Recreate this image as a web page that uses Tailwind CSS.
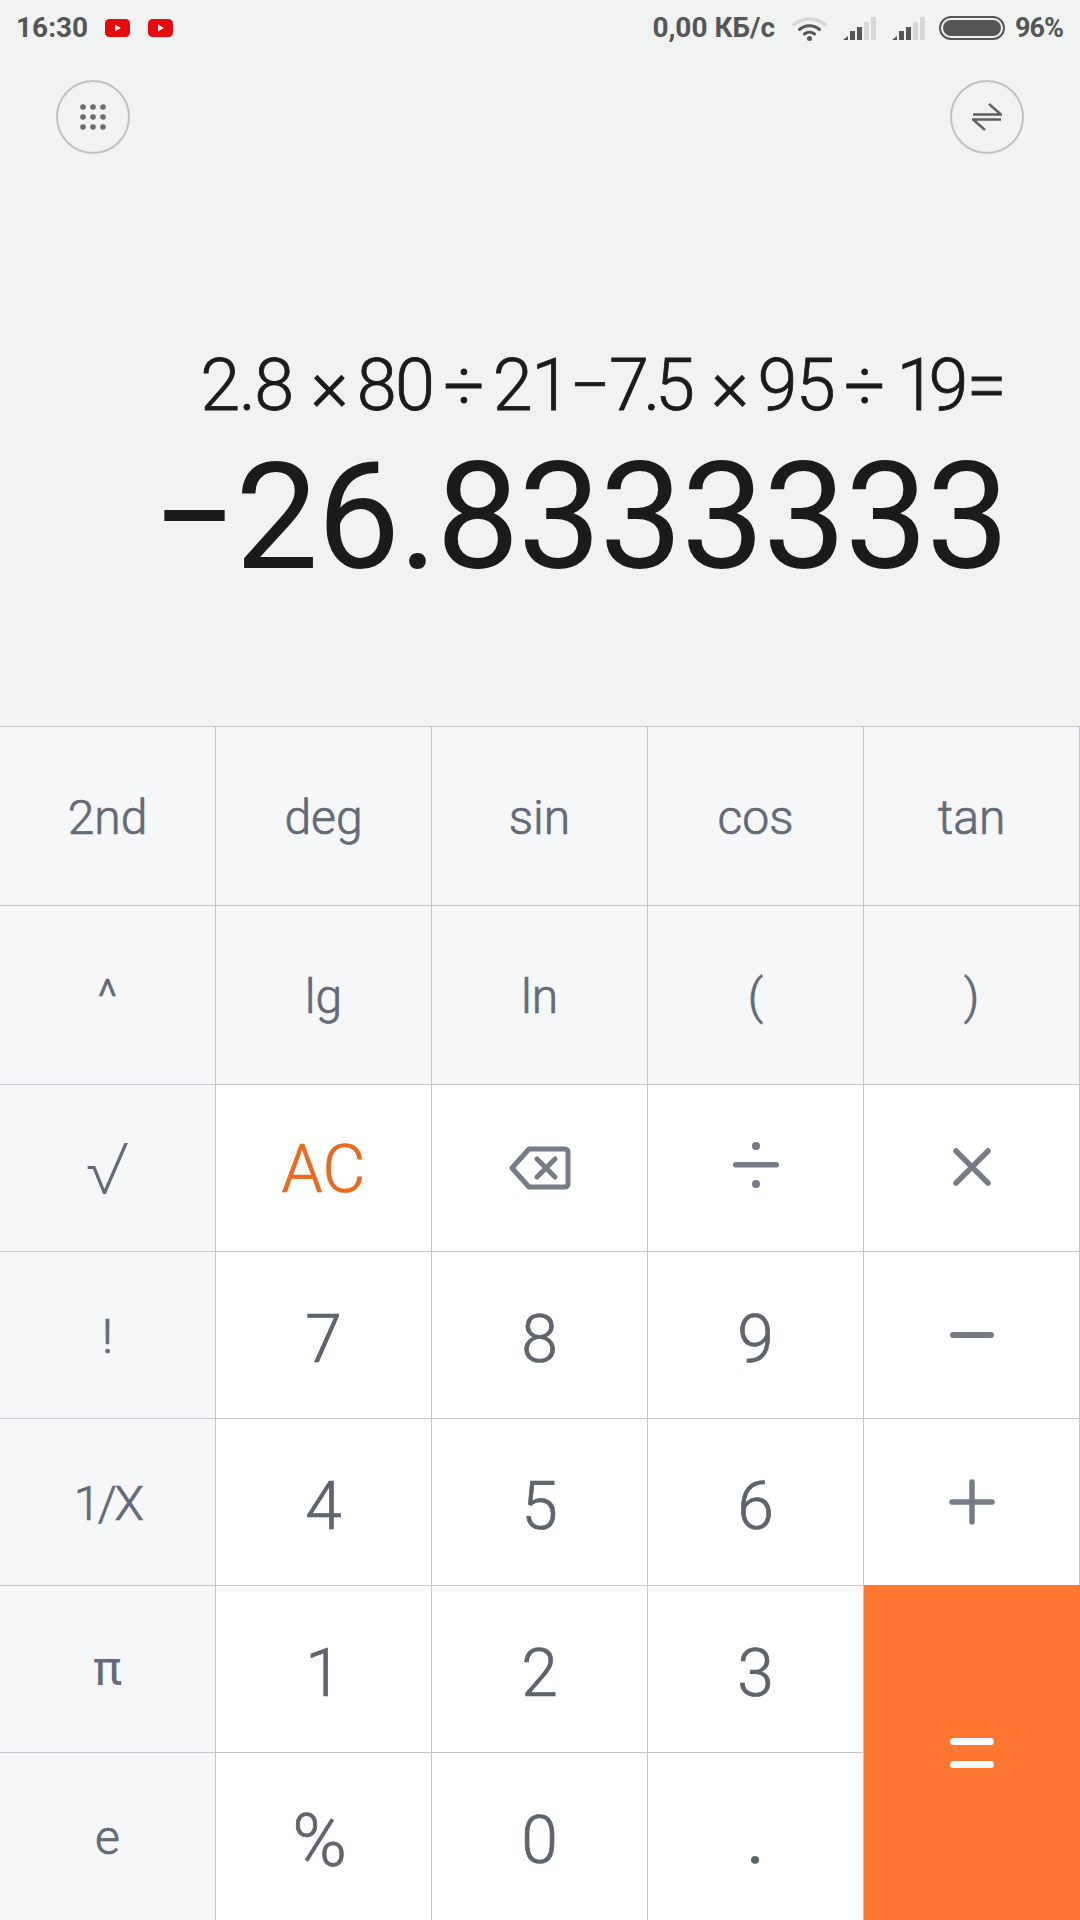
<!DOCTYPE html>
<html lang="en">
<head>
  <meta charset="UTF-8" />
  <meta name="viewport" content="width=device-width, initial-scale=1.0"/>
  <title>Calculator</title>
  <script src="https://cdn.jsdelivr.net/npm/@tailwindcss/browser@4"></script>
</head>
<body class="w-[1080px] h-[1920px] overflow-hidden bg-[#f1f3f3] font-['Roboto',sans-serif]">

  <!-- Status bar -->
  <div class="flex items-center h-[56px] pl-[16px] pr-[17px] text-[#555757] font-bold text-[28px]">
    <span class="w-[72px]">16:30</span>
    <svg class="ml-[17px] w-[25px] h-[18px]" viewBox="0 0 25 18"><rect width="25" height="18" rx="4.5" fill="#e50b0f"/><path d="M10 5.5v7l6-3.5z" fill="#fde8e8"/></svg>
    <svg class="ml-[18px] w-[25px] h-[18px]" viewBox="0 0 25 18"><rect width="25" height="18" rx="4.5" fill="#e50b0f"/><path d="M10 5.5v7l6-3.5z" fill="#fde8e8"/></svg>
    <span class="ml-auto">0,00 КБ/с</span>
    <svg class="ml-[17px] w-[35px] h-[25px]" viewBox="0 0 35 25" fill="none" stroke-linecap="round">
      <path d="M2 8.5C11 1 24 1 33 8.5" stroke="#d6d8d8" stroke-width="3.5"/>
      <path d="M7.5 13.5C13.5 8.5 21.500 8.500 27.500 13.500" stroke="#555757" stroke-width="3"/>
      <path d="M12.500 18C15.500 15.500 19.500 15.500 22.500 18" stroke="#555757" stroke-width="3"/>
      <circle cx="17.500" cy="22.500" r="2.500" fill="#555757"/>
    </svg>
    <svg class="ml-[16px] w-[34px] h-[24px]" viewBox="0 0 34 24">
      <path d="M0 24h5v-4z" fill="#555757"/><rect x="7" y="15" width="5" height="9" fill="#555757"/><rect x="14" y="11" width="5" height="13" fill="#555757"/>
      <rect x="21" y="6" width="5" height="18" fill="#d6d8d8"/><rect x="28" y="1" width="5" height="23" fill="#d6d8d8"/>
    </svg>
    <svg class="ml-[15px] w-[34px] h-[24px]" viewBox="0 0 34 24">
      <path d="M0 24h5v-4z" fill="#555757"/><rect x="7" y="15" width="5" height="9" fill="#555757"/><rect x="14" y="11" width="5" height="13" fill="#555757"/>
      <rect x="21" y="6" width="5" height="18" fill="#d6d8d8"/><rect x="28" y="1" width="5" height="23" fill="#d6d8d8"/>
    </svg>
    <div class="ml-[13px] w-[66px] h-[24px] rounded-full border-2 border-[#555757] p-[2px]">
      <div class="w-full h-full rounded-full bg-[#555757]"></div>
    </div>
    <span class="ml-[10px] text-[27px] tracking-[-1px]">96%</span>
  </div>

  <!-- Toolbar -->
  <div class="flex justify-between h-[74px] mt-[24px] pl-[56px] pr-[56px]">
    <div class="flex items-center justify-center w-[74px] h-[74px] rounded-full border-2 border-[#bfc1c1]">
      <svg class="w-[28px] h-[28px]" viewBox="0 0 28 28" fill="#696b6c">
        <circle cx="4" cy="4" r="2.800"/><circle cx="14" cy="4" r="2.800"/><circle cx="24" cy="4" r="2.800"/>
        <circle cx="4" cy="14" r="2.800"/><circle cx="14" cy="14" r="2.800"/><circle cx="24" cy="14" r="2.800"/>
        <circle cx="4" cy="24" r="2.800"/><circle cx="14" cy="24" r="2.800"/><circle cx="24" cy="24" r="2.800"/>
      </svg>
    </div>
    <div class="flex items-center justify-center w-[74px] h-[74px] rounded-full border-2 border-[#bfc1c1]">
      <svg class="w-[30px] h-[30px]" viewBox="0 0 30 30" fill="none" stroke="#5f6162" stroke-width="2.400">
        <path d="M1 12.500h28L17 2"/><path d="M29 17.500H1L13 28"/>
      </svg>
    </div>
  </div>

  <!-- Display -->
  <div class="flex flex-col items-end h-[572px] pt-[190px] pr-[75px] text-[#1a1b1b]">
    <div class="text-[72px] leading-[84px] font-light [-webkit-text-stroke-width:0.8px] tracking-[-1.600px] whitespace-nowrap">2.8<span class="ml-[18px] mr-[10px]">×</span>80<span class="mx-[10px]">÷</span>21−<span class="tracking-[-5.600px]">7.</span>5<span class="ml-[18px] mr-[10px]">×</span>95<span class="ml-[10px] mr-[13px]">÷</span><span class="tracking-[-8px]">1</span>9=</div>
    <div class="mt-[5px] -mr-[3px] text-[148px] leading-[170px] font-normal tracking-[-1.500px] whitespace-nowrap">−26.8333333</div>
  </div>

  <!-- Keypad -->
  <div class="grid grid-cols-[repeat(5,216px)] grid-rows-[179px_179px_167px_167px_167px_167px_168px] text-[#646a76] font-light [-webkit-text-stroke-width:0.7px] text-[48px]">
    <div class="flex items-center justify-center pt-[3px] bg-[#f6f7f9] border-t border-r border-[#c4c6c9]">2nd</div>
    <div class="flex items-center justify-center pt-[3px] bg-[#f6f7f9] border-t border-r border-[#c4c6c9]">deg</div>
    <div class="flex items-center justify-center pt-[3px] bg-[#f6f7f9] border-t border-r border-[#c4c6c9]">sin</div>
    <div class="flex items-center justify-center pt-[3px] bg-[#f6f7f9] border-t border-r border-[#c4c6c9]">cos</div>
    <div class="flex items-center justify-center pt-[3px] bg-[#f6f7f9] border-t border-r border-[#c4c6c9]">tan</div>

    <div class="flex items-center justify-center pt-[3px] bg-[#f6f7f9] border-t border-r border-[#c4c6c9]">^</div>
    <div class="flex items-center justify-center pt-[3px] bg-[#f6f7f9] border-t border-r border-[#c4c6c9]">lg</div>
    <div class="flex items-center justify-center pt-[3px] bg-[#f6f7f9] border-t border-r border-[#c4c6c9]">ln</div>
    <div class="flex items-center justify-center pt-[3px] bg-[#f6f7f9] border-t border-r border-[#c4c6c9]">(</div>
    <div class="flex items-center justify-center pt-[3px] bg-[#f6f7f9] border-t border-r border-[#c4c6c9]">)</div>

    <div class="flex items-center justify-center bg-[#f6f7f9] border-t border-r border-[#c4c6c9] text-[70px] font-['Inter',sans-serif] font-extralight [-webkit-text-stroke-width:0px]">√</div>
    <div class="flex items-center justify-center pt-[2px] bg-white border-t border-r border-[#c4c6c9] text-[#e96a1f] text-[66px]">AC</div>
    <div class="flex items-center justify-center bg-white border-t border-r border-[#c4c6c9]">
      <svg class="w-[62px] h-[44px]" viewBox="0 0 62 44" fill="none" stroke="#767b86" stroke-width="5" stroke-linecap="round" stroke-linejoin="round">
        <path d="M20 3h36a3 3 0 0 1 3 3v32a3 3 0 0 1-3 3H20L3 22z"/><path d="M28 13l18 18M46 13L28 31"/>
      </svg>
    </div>
    <div class="flex items-center justify-center pb-[6px] bg-white border-t border-r border-[#c4c6c9]">
      <svg class="w-[46px] h-[46px]" viewBox="0 0 46 46" fill="#767b86"><circle cx="23" cy="4" r="4"/><rect x="0" y="20" width="46" height="5.500" rx="2.700"/><circle cx="23" cy="42" r="4"/></svg>
    </div>
    <div class="flex items-center justify-center pb-[2px] bg-white border-t border-r border-[#c4c6c9]">
      <svg class="w-[38px] h-[38px]" viewBox="0 0 38 38" fill="none" stroke="#767b86" stroke-width="5.500" stroke-linecap="round"><path d="M3 3l32 32M35 3L3 35"/></svg>
    </div>

    <div class="flex items-center justify-center pt-[3px] bg-[#f6f7f9] border-t border-r border-[#c4c6c9]">!</div>
    <div class="flex items-center justify-center pt-[8px] bg-white border-t border-r border-[#c4c6c9] text-[#5e636c] text-[66px]">7</div>
    <div class="flex items-center justify-center pt-[8px] bg-white border-t border-r border-[#c4c6c9] text-[#5e636c] text-[66px]">8</div>
    <div class="flex items-center justify-center pt-[8px] bg-white border-t border-r border-[#c4c6c9] text-[#5e636c] text-[66px]">9</div>
    <div class="flex items-center justify-center bg-white border-t border-r border-[#c4c6c9]">
      <svg class="w-[44px] h-[6px]" viewBox="0 0 44 6" fill="#767b86"><rect width="44" height="6" rx="3"/></svg>
    </div>

    <div class="flex items-center justify-center pt-[3px] bg-[#f6f7f9] border-t border-r border-[#c4c6c9] tracking-[-2.500px]">1/X</div>
    <div class="flex items-center justify-center pt-[8px] bg-white border-t border-r border-[#c4c6c9] text-[#5e636c] text-[66px]">4</div>
    <div class="flex items-center justify-center pt-[8px] bg-white border-t border-r border-[#c4c6c9] text-[#5e636c] text-[66px]">5</div>
    <div class="flex items-center justify-center pt-[8px] bg-white border-t border-r border-[#c4c6c9] text-[#5e636c] text-[66px]">6</div>
    <div class="flex items-center justify-center bg-white border-t border-r border-[#c4c6c9]">
      <svg class="w-[46px] h-[46px]" viewBox="0 0 46 46" fill="none" stroke="#767b86" stroke-width="5.500" stroke-linecap="round"><path d="M3 23h40M23 3v40"/></svg>
    </div>

    <div class="flex items-center justify-center bg-[#f6f7f9] border-t border-r border-[#c4c6c9] font-normal [-webkit-text-stroke-width:0px]">π</div>
    <div class="flex items-center justify-center pt-[8px] bg-white border-t border-r border-[#c4c6c9] text-[#5e636c] text-[66px]">1</div>
    <div class="flex items-center justify-center pt-[8px] bg-white border-t border-r border-[#c4c6c9] text-[#5e636c] text-[66px]">2</div>
    <div class="flex items-center justify-center pt-[8px] bg-white border-t border-r border-[#c4c6c9] text-[#5e636c] text-[66px]">3</div>
    <div class="row-span-2 flex items-center justify-center bg-[#fd7731]">
      <svg class="w-[44px] h-[30px]" viewBox="0 0 44 30" fill="#fff"><rect width="44" height="7" rx="3.500"/><rect y="23" width="44" height="7" rx="3.500"/></svg>
    </div>

    <div class="flex items-center justify-center pt-[3px] bg-[#f6f7f9] border-t border-r border-[#c4c6c9]">e</div>
    <div class="flex items-center justify-center pt-[8px] pr-[8px] bg-white border-t border-r border-[#c4c6c9] text-[#5e636c] text-[74px]">%</div>
    <div class="flex items-center justify-center pt-[8px] bg-white border-t border-r border-[#c4c6c9] text-[#5e636c] text-[66px]">0</div>
    <div class="flex items-center justify-center pt-[8px] bg-white border-t border-r border-[#c4c6c9] text-[#5e636c] text-[66px] font-normal">.</div>
  </div>
</body>
</html>
